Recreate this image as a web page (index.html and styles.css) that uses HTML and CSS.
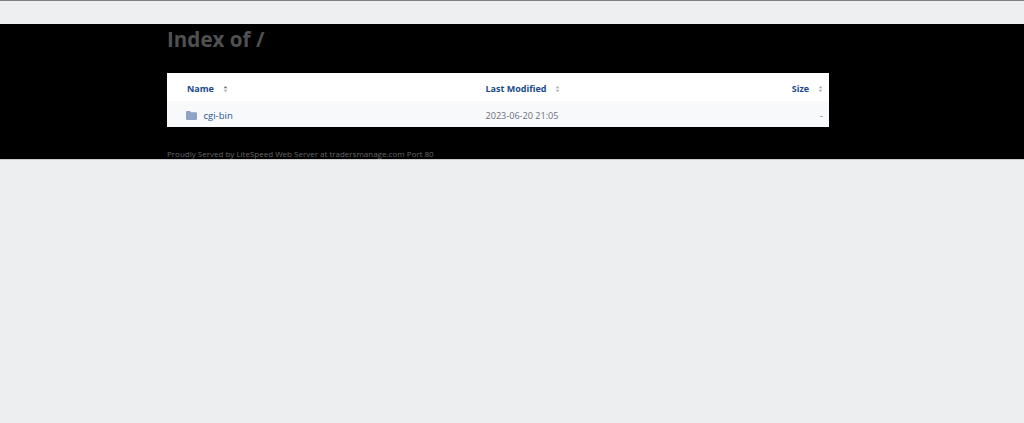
FILE: index.html
```html
<!DOCTYPE html>
<html lang="en">
<head>
  <meta charset="UTF-8" />
  <meta name="viewport" content="width=device-width, initial-scale=1.0" />
  <title>Index of /</title>
  <link rel="stylesheet" href="styles.css">
</head>
<body>
  <div class="top-bar"></div>

  <!-- Listing -->
  <section class="listing">
    <div class="wrap">
      <h1>Index of /</h1>
      <table>
        <thead>
          <tr>
            <th class="col-name"><a href="#">Name</a>
              <svg class="sort" viewBox="0 0 6 8"><path d="M3 0 5.6 3H.4z" fill="#6b7280"/><path d="M3 8 .4 5h5.2z" fill="#a8adb6"/></svg>
            </th>
            <th class="col-date"><a href="#">Last Modified</a>
              <svg class="sort" viewBox="0 0 6 8"><path d="M3 0 5.6 3H.4z" fill="#a8adb6"/><path d="M3 8 .4 5h5.2z" fill="#a8adb6"/></svg>
            </th>
            <th class="col-size"><a href="#">Size</a>
              <svg class="sort" viewBox="0 0 6 8"><path d="M3 0 5.6 3H.4z" fill="#a8adb6"/><path d="M3 8 .4 5h5.2z" fill="#a8adb6"/></svg>
            </th>
          </tr>
        </thead>
        <tbody>
          <tr>
            <td class="col-name">
              <svg class="folder" viewBox="0 0 11 9"><path d="M1 0h3l1.2 1.3H10a1 1 0 0 1 1 1V8a1 1 0 0 1-1 1H1a1 1 0 0 1-1-1V1a1 1 0 0 1 1-1z" fill="#8fa3c7"/></svg>
              <a href="#">cgi-bin</a>
            </td>
            <td class="col-date">2023-06-20 21:05</td>
            <td class="col-size">-</td>
          </tr>
        </tbody>
      </table>
      <address>Proudly Served by LiteSpeed Web Server at tradersmanage.com Port 80</address>
    </div>
  </section>
</body>
</html>
```

FILE: styles.css
```css
html, body {
  height: 100%;
}
body {
  margin: 0;
  font-family: "Open Sans", "Noto Sans", sans-serif;
  background-color: #eceef0;
}
.top-bar {
  height: 23px;
  border-top: 1px solid #7d7e80;
  background: #eeeff1;
}
.listing {
  height: 135px;
  background: #000;
  border-bottom: 1px solid #c9cacc;
  overflow: hidden;
}
.wrap {
  width: 662px;
  margin-left: 167px;
}
h1 {
  margin: 0;
  height: 49px;
  font-size: 20.6px;
  line-height: 30px;
  font-weight: 700;
  color: #505050;
}
table {
  width: 100%;
  border-collapse: collapse;
  table-layout: fixed;
  font-size: 9.1px;
}
th {
  height: 28px;
  padding: 3px 0 0;
  box-sizing: border-box;
  background: #fff;
  text-align: left;
  font-size: 9px;
  font-weight: 700;
}
th a {
  color: #1a4a8e;
  text-decoration: none;
}
td {
  height: 26px;
  padding: 3px 0 0;
  box-sizing: border-box;
  background: #f7f9fb;
  color: #6b7280;
}
td a {
  color: #2b5797;
  font-size: 9.6px;
  text-decoration: none;
}
.col-name {
  width: 318.5px;
  padding-left: 20px;
}
td.col-name {
  padding-left: 19px;
}
.col-date {
  width: 240px;
}
.col-size {
  padding-right: 6px;
  text-align: right;
}
.sort {
  width: 5px;
  height: 6px;
  margin-left: 6.5px;
}
.folder {
  width: 11px;
  height: 9px;
  margin-right: 4px;
  vertical-align: -1px;
}
address {
  margin-top: 21px;
  font-size: 8px;
  line-height: 12px;
  font-style: normal;
  color: #666;
}
```
